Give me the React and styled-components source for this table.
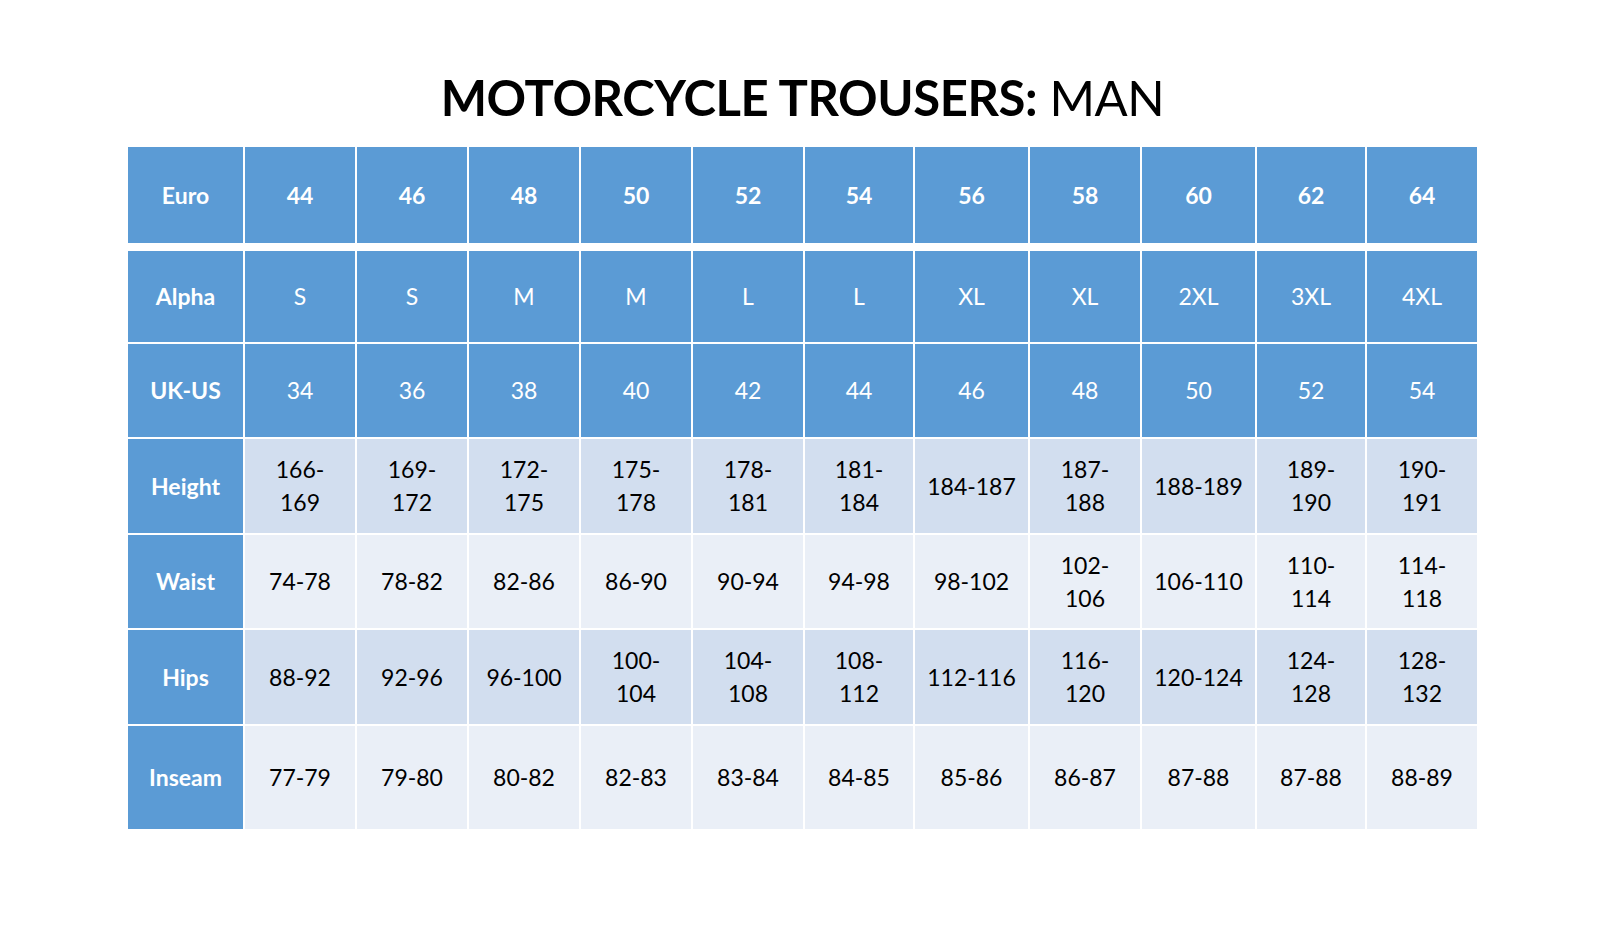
import styled, { createGlobalStyle } from 'styled-components'

const GlobalStyle = createGlobalStyle`
  html, body {
    margin: 0;
    padding: 0;
    background: #ffffff;
  }
  body {
    font-family: Lato, "Open Sans", "Liberation Sans", sans-serif;
  }
`

const COLUMNS = '115px 110px 110px 110px 110px 110px 108px 113px 110px 113px 108px 110px'

const rows = [
  { label: 'Euro', tone: 'blue', bold: true, height: 96, gapAfter: 6, values: ['44', '46', '48', '50', '52', '54', '56', '58', '60', '62', '64'] },
  { label: 'Alpha', tone: 'blue', height: 91, values: ['S', 'S', 'M', 'M', 'L', 'L', 'XL', 'XL', '2XL', '3XL', '4XL'] },
  { label: 'UK-US', tone: 'blue', height: 93, values: ['34', '36', '38', '40', '42', '44', '46', '48', '50', '52', '54'] },
  { label: 'Height', tone: 'dark', height: 94, values: ['166-\n169', '169-\n172', '172-\n175', '175-\n178', '178-\n181', '181-\n184', '184-187', '187-\n188', '188-189', '189-\n190', '190-\n191'] },
  { label: 'Waist', tone: 'light', height: 93, values: ['74-78', '78-82', '82-86', '86-90', '90-94', '94-98', '98-102', '102-\n106', '106-110', '110-\n114', '114-\n118'] },
  { label: 'Hips', tone: 'dark', height: 94, values: ['88-92', '92-96', '96-100', '100-\n104', '104-\n108', '108-\n112', '112-116', '116-\n120', '120-124', '124-\n128', '128-\n132'] },
  { label: 'Inseam', tone: 'light', height: 103, values: ['77-79', '79-80', '80-82', '82-83', '83-84', '84-85', '85-86', '86-87', '87-88', '87-88', '88-89'] },
]

const tones = {
  blue: { bg: '#5b9bd5', fg: '#ffffff' },
  dark: { bg: '#d2deef', fg: '#000000' },
  light: { bg: '#eaeff7', fg: '#000000' },
}

const Page = styled.main`
  padding: 69px 0 0 128px;
  width: 1349px;
`

const Title = styled.h1`
  margin: 0 0 22px;
  text-align: center;
  font-size: 49px;
  line-height: 56px;
  font-weight: 400;
  color: #000000;
  letter-spacing: -0.4px;

  strong {
    font-weight: 700;
  }
`

const Table = styled.div`
  display: flex;
  flex-direction: column;
  gap: 2px;
`

const Row = styled.div`
  display: grid;
  grid-template-columns: ${COLUMNS};
  column-gap: 2px;
  height: ${(p) => p.$height}px;
  margin-bottom: ${(p) => p.$gapAfter || 0}px;
`

const Cell = styled.div`
  display: flex;
  align-items: center;
  justify-content: center;
  text-align: center;
  white-space: pre-line;
  background: ${(p) => tones[p.$tone].bg};
  color: ${(p) => tones[p.$tone].fg};
  font-size: 23px;
  line-height: 33px;
  font-weight: ${(p) => (p.$bold ? 700 : 400)};
`

const App = () => (
  <>
    <GlobalStyle />
    <Page>
      <Title>
        <strong>MOTORCYCLE TROUSERS:</strong> MAN
      </Title>
      <Table>
        {rows.map((row) => (
          <Row key={row.label} $height={row.height} $gapAfter={row.gapAfter}>
            <Cell $tone="blue" $bold>
              {row.label}
            </Cell>
            {row.values.map((value, i) => (
              <Cell key={i} $tone={row.tone} $bold={row.bold}>
                {value}
              </Cell>
            ))}
          </Row>
        ))}
      </Table>
    </Page>
  </>
)

export default App
